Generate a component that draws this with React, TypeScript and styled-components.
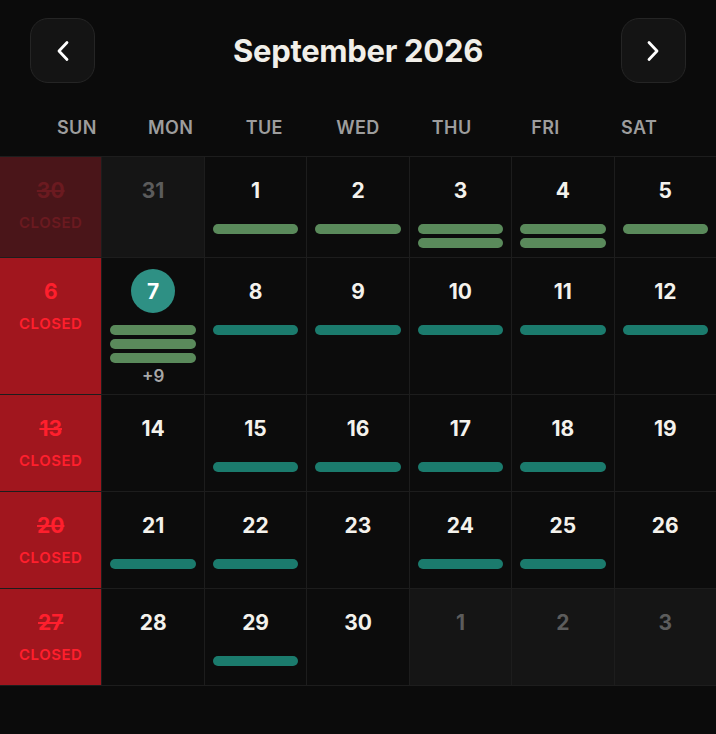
import React from "react";
import styled, { createGlobalStyle } from "styled-components";

const Global = createGlobalStyle`
  html, body { margin: 0; padding: 0; background: #0b0b0b; }
  body { font-family: Inter, "Noto Sans", "Liberation Sans", sans-serif; color: #f2f0ea; }
  #root { min-height: 734px; background: #0b0b0b; }
`;

type Bar = "g" | "t";
type Day = {
  n: number;
  kind?: "normal" | "other" | "closed" | "closedOther";
  strike?: boolean;
  today?: boolean;
  bars?: Bar[];
  more?: number;
};

const weeks: Day[][] = [
  [
    { n: 30, kind: "closedOther", strike: true },
    { n: 31, kind: "other" },
    { n: 1, bars: ["g"] },
    { n: 2, bars: ["g"] },
    { n: 3, bars: ["g", "g"] },
    { n: 4, bars: ["g", "g"] },
    { n: 5, bars: ["g"] },
  ],
  [
    { n: 6, kind: "closed" },
    { n: 7, today: true, bars: ["g", "g", "g"], more: 9 },
    { n: 8, bars: ["t"] },
    { n: 9, bars: ["t"] },
    { n: 10, bars: ["t"] },
    { n: 11, bars: ["t"] },
    { n: 12, bars: ["t"] },
  ],
  [
    { n: 13, kind: "closed", strike: true },
    { n: 14 },
    { n: 15, bars: ["t"] },
    { n: 16, bars: ["t"] },
    { n: 17, bars: ["t"] },
    { n: 18, bars: ["t"] },
    { n: 19 },
  ],
  [
    { n: 20, kind: "closed", strike: true },
    { n: 21, bars: ["t"] },
    { n: 22, bars: ["t"] },
    { n: 23 },
    { n: 24, bars: ["t"] },
    { n: 25, bars: ["t"] },
    { n: 26 },
  ],
  [
    { n: 27, kind: "closed", strike: true },
    { n: 28 },
    { n: 29, bars: ["t"] },
    { n: 30 },
    { n: 1, kind: "other" },
    { n: 2, kind: "other" },
    { n: 3, kind: "other" },
  ],
];

const Page = styled.div`
  width: 716px;
  background: #0b0b0b;
`;

const Header = styled.div`
  padding: 18px 30px 0;
`;

const NavRow = styled.div`
  display: flex;
  align-items: center;
  justify-content: space-between;
  height: 65px;
`;

const NavButton = styled.button`
  width: 65px;
  height: 65px;
  border-radius: 18px;
  background: #141414;
  border: 1px solid #252525;
  display: flex;
  align-items: center;
  justify-content: center;
  padding: 0;
  cursor: pointer;
`;

const Title = styled.h1`
  margin: 0;
  font-size: 31px;
  font-weight: 700;
  letter-spacing: -0.3px;
  color: #f1efe9;
`;

const Weekdays = styled.div`
  display: grid;
  grid-template-columns: repeat(7, 1fr);
  margin-top: 34px;
  margin-bottom: 17px;
`;

const Weekday = styled.div`
  text-align: center;
  font-size: 18px;
  font-weight: 600;
  line-height: 22px;
  color: #9d9d9d;
  letter-spacing: 0.4px;
`;

const Grid = styled.div`
  display: grid;
  grid-template-columns: repeat(7, 1fr);
  gap: 1px;
  background: #1d1d1d;
  border-top: 1px solid #1d1d1d;
  border-bottom: 1px solid #1d1d1d;
`;

const cellBg: Record<string, string> = {
  normal: "#0c0c0c",
  other: "#151515",
  closed: "#a1161e",
  closedOther: "#4a1519",
};

const Cell = styled.div<{ $kind: string }>`
  background: ${(p) => cellBg[p.$kind]};
  min-height: 96px;
  padding: 11px 8px 9px;
  box-sizing: border-box;
  display: flex;
  flex-direction: column;
  align-items: stretch;
`;

const numColor: Record<string, string> = {
  normal: "#f4f2ec",
  other: "#5c5c5c",
  closed: "#ff1f2d",
  closedOther: "#6b1a20",
};

const NumBox = styled.div`
  height: 44px;
  display: flex;
  align-items: center;
  justify-content: center;
`;

const Num = styled.span<{ $kind: string; $strike?: boolean }>`
  font-size: 21px;
  font-weight: 700;
  color: ${(p) => numColor[p.$kind]};
  text-decoration: ${(p) => (p.$strike ? "line-through" : "none")};
  text-decoration-thickness: 2px;
`;

const TodayCircle = styled.span`
  width: 44px;
  height: 44px;
  border-radius: 50%;
  background: #2e9084;
  color: #fff;
  font-size: 21px;
  font-weight: 700;
  display: flex;
  align-items: center;
  justify-content: center;
`;

const Closed = styled.div<{ $kind: string }>`
  margin-top: 3px;
  text-align: center;
  font-size: 15px;
  line-height: 16px;
  font-weight: 600;
  letter-spacing: 0.5px;
  color: ${(p) => numColor[p.$kind]};
`;

const Bars = styled.div`
  margin-top: 12px;
  display: flex;
  flex-direction: column;
  gap: 4px;
`;

const EventBar = styled.div<{ $c: Bar }>`
  height: 10px;
  border-radius: 6px;
  background: ${(p) => (p.$c === "g" ? "#5a8a5b" : "#1b7b6d")};
`;

const More = styled.div`
  margin-top: 4px;
  text-align: center;
  font-size: 17px;
  line-height: 18px;
  font-weight: 600;
  color: #a8a8a8;
`;

const Chevron = ({ dir }: { dir: "left" | "right" }) => (
  <svg width="14" height="22" viewBox="0 0 14 22" fill="none">
    <polyline
      points={dir === "left" ? "11,2.5 3,11 11,19.5" : "3,2.5 11,11 3,19.5"}
      stroke="#ffffff"
      strokeWidth="2.8"
      strokeLinecap="round"
      strokeLinejoin="round"
    />
  </svg>
);

const names = ["SUN", "MON", "TUE", "WED", "THU", "FRI", "SAT"];

export default function App() {
  return (
    <Page>
      <Global />
      <Header>
        <NavRow>
          <NavButton aria-label="Previous month">
            <Chevron dir="left" />
          </NavButton>
          <Title>September 2026</Title>
          <NavButton aria-label="Next month">
            <Chevron dir="right" />
          </NavButton>
        </NavRow>
        <Weekdays>
          {names.map((n) => (
            <Weekday key={n}>{n}</Weekday>
          ))}
        </Weekdays>
      </Header>
      <Grid>
        {weeks.flat().map((d, i) => {
          const kind = d.kind ?? "normal";
          const closed = kind === "closed" || kind === "closedOther";
          return (
            <Cell key={i} $kind={kind}>
              <NumBox>
                {d.today ? (
                  <TodayCircle>{d.n}</TodayCircle>
                ) : (
                  <Num $kind={kind} $strike={d.strike}>
                    {d.n}
                  </Num>
                )}
              </NumBox>
              {closed && <Closed $kind={kind}>CLOSED</Closed>}
              {d.bars && (
                <Bars>
                  {d.bars.map((b, j) => (
                    <EventBar key={j} $c={b} />
                  ))}
                </Bars>
              )}
              {d.more ? <More>+{d.more}</More> : null}
            </Cell>
          );
        })}
      </Grid>
    </Page>
  );
}
